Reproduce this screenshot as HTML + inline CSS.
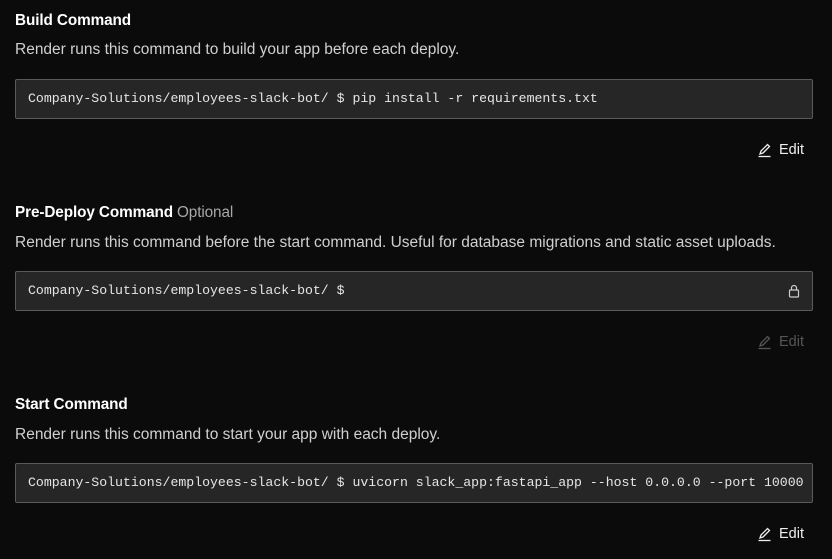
<!DOCTYPE html>
<html><head><style>
body{margin:0;background:#0b0b0b;width:832px;height:559px;overflow:hidden;font-family:"Liberation Sans",sans-serif;position:relative}
.t{position:absolute;left:15px;color:#fff;font-weight:bold;font-size:15.3px;letter-spacing:-0.1px}
.t span{font-weight:normal;color:#a8a8a8;margin-left:4px;font-size:15.3px}
.d{position:absolute;left:15px;color:#d0d0d0;font-size:15.5px}
.b{position:absolute;left:15px;width:796px;height:38px;background:#262626;border:1px solid #5a5a5a;border-radius:2px}
.b div{position:absolute;left:12px;top:11px;font-family:"Liberation Mono",monospace;font-size:13.2px;color:#e6e6e6;white-space:pre}
.e{position:absolute;left:757px;font-size:14.5px;color:#eee;display:flex;align-items:center;gap:6px}
.e.dis{color:#555}
</style></head><body>
<div class="t" style="top:12px">Build Command</div>
<div class="d" style="top:41px">Render runs this command to build your app before each deploy.</div>
<div class="b" style="top:79px"><div>Company-Solutions/employees-slack-bot/ $ pip install -r requirements.txt</div></div>
<div class="e" style="top:142px"><svg width="16" height="16" viewBox="0 0 16 16" fill="none" stroke="currentColor" stroke-width="1.3"><path d="M3 12l1-3 6.5-6.5 2 2L6 11z"/><path d="M1.5 14.5h12"/></svg>Edit</div>

<div class="t" style="top:204px">Pre-Deploy Command<span>Optional</span></div>
<div class="d" style="top:234px">Render runs this command before the start command. Useful for database migrations and static asset uploads.</div>
<div class="b" style="top:271px"><div>Company-Solutions/employees-slack-bot/ $</div>
<svg style="position:absolute;left:772px;top:12px" width="12" height="14" viewBox="0 0 12 14" fill="none" stroke="#ccc" stroke-width="1.2"><rect x="1.5" y="6" width="9" height="7" rx="1"/><path d="M3.5 6V4a2.5 2.5 0 0 1 5 0v2"/></svg></div>
<div class="e dis" style="top:334px"><svg width="16" height="16" viewBox="0 0 16 16" fill="none" stroke="currentColor" stroke-width="1.3"><path d="M3 12l1-3 6.5-6.5 2 2L6 11z"/><path d="M1.5 14.5h12"/></svg>Edit</div>

<div class="t" style="top:396px">Start Command</div>
<div class="d" style="top:426px">Render runs this command to start your app with each deploy.</div>
<div class="b" style="top:463px"><div>Company-Solutions/employees-slack-bot/ $ uvicorn slack_app:fastapi_app --host 0.0.0.0 --port 10000</div></div>
<div class="e" style="top:526px"><svg width="16" height="16" viewBox="0 0 16 16" fill="none" stroke="currentColor" stroke-width="1.3"><path d="M3 12l1-3 6.5-6.5 2 2L6 11z"/><path d="M1.5 14.5h12"/></svg>Edit</div>
</body></html>
